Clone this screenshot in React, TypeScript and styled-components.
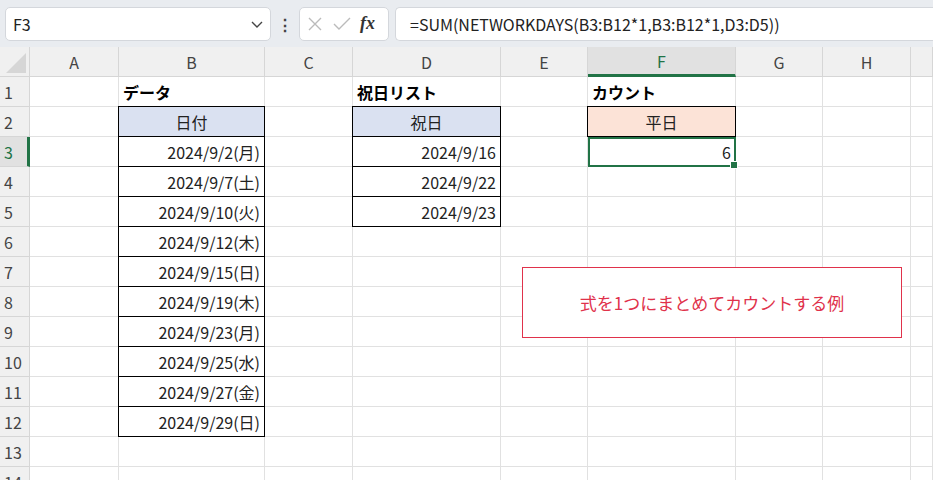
import React from "react";
import styled, { createGlobalStyle } from "styled-components";

const Global = createGlobalStyle`
  body { margin: 0; background: #fff; font-family: "Noto Sans CJK JP", "Noto Sans", sans-serif; }
`;

const Page = styled.div`
  width: 933px;
  height: 480px;
  overflow: hidden;
  position: relative;
  background: #fff;
`;

const Toolbar = styled.div`
  height: 47px;
  background: #e9ecf0;
  display: flex;
  align-items: center;
  padding: 0 0 0 5px;
  gap: 6px;
  box-sizing: border-box;
`;

const NameBox = styled.div`
  width: 266px;
  height: 34px;
  background: #fff;
  border: 1px solid #d4d7dc;
  border-radius: 5px;
  box-sizing: border-box;
  display: flex;
  align-items: center;
  justify-content: space-between;
  padding: 0 6px 0 7px;
  font-size: 16px;
  color: #222;
`;

const Dots = styled.div`
  width: 16px;
  text-align: center;
  font-weight: bold;
  color: #444;
  font-size: 16px;
  line-height: 1;
`;

const FxBox = styled.div`
  width: 90px;
  height: 34px;
  background: #fff;
  border: 1px solid #d4d7dc;
  border-radius: 5px;
  box-sizing: border-box;
  display: flex;
  align-items: center;
  gap: 8px;
  padding: 0 6px;
`;

const Fx = styled.span`
  font-family: "Liberation Serif", serif;
  font-style: italic;
  font-weight: bold;
  font-size: 18px;
  color: #333;
`;

const FormulaBox = styled.div`
  flex: 1;
  height: 34px;
  background: #fff;
  border: 1px solid #d4d7dc;
  border-right: none;
  border-radius: 5px 0 0 5px;
  box-sizing: border-box;
  display: flex;
  align-items: center;
  padding-left: 14px;
  font-size: 16px;
  color: #222;
`;

const Grid = styled.div`
  display: grid;
  grid-template-columns: 30px 89px 146px 88px 148px 87px 148px 87px 88px 22px;
  grid-auto-rows: 30px;
  grid-template-rows: 30px;
  position: relative;
`;

const ColHead = styled.div<{ $active?: boolean }>`
  background: ${(p) => (p.$active ? "#e1e1e1" : "#f0f0f0")};
  border-right: 1px solid #d6d6d6;
  border-bottom: ${(p) => (p.$active ? "3px solid #217346" : "1px solid #d6d6d6")};
  color: ${(p) => (p.$active ? "#217346" : "#444")};
  display: flex;
  align-items: center;
  justify-content: center;
  font-size: 16px;
  box-sizing: border-box;
`;

const Corner = styled(ColHead)`
  position: relative;
  &::after {
    content: "";
    position: absolute;
    right: 3px;
    bottom: 3px;
    border-left: 20px solid transparent;
    border-bottom: 20px solid #d6d6d6;
  }
`;

const RowHead = styled.div<{ $active?: boolean }>`
  background: ${(p) => (p.$active ? "#e1e1e1" : "#f0f0f0")};
  border-right: ${(p) => (p.$active ? "3px solid #217346" : "1px solid #d6d6d6")};
  border-bottom: 1px solid #d6d6d6;
  color: ${(p) => (p.$active ? "#217346" : "#444")};
  display: flex;
  align-items: center;
  padding-left: 4px;
  font-size: 16px;
  box-sizing: border-box;
`;

const Cell = styled.div<{ $boxed?: boolean; $align?: string; $bold?: boolean; $bg?: string }>`
  border-right: 1px solid ${(p) => (p.$boxed ? "#000" : "#e1e1e1")};
  border-bottom: 1px solid ${(p) => (p.$boxed ? "#000" : "#e1e1e1")};
  box-shadow: ${(p) => (p.$boxed ? "-1px 0 0 #000, 0 -1px 0 #000, -1px -1px 0 #000" : "none")};
  position: relative;
  z-index: ${(p) => (p.$boxed ? 1 : 0)};
  background: ${(p) => p.$bg || "#fff"};
  display: flex;
  align-items: center;
  justify-content: ${(p) => p.$align || "flex-start"};
  padding: 0 4px;
  font-size: 16px;
  font-weight: ${(p) => (p.$bold ? 700 : 400)};
  color: ${(p) => (p.$bold ? "#000" : "#222")};
  box-sizing: border-box;
  white-space: nowrap;
`;

const Selected = styled(Cell)`
  outline: 2px solid #217346;
  outline-offset: -2px;
  z-index: 2;
  &::after {
    content: "";
    position: absolute;
    right: -3px;
    bottom: -3px;
    width: 6px;
    height: 6px;
    background: #217346;
    border: 1px solid #fff;
  }
`;

const Note = styled.div`
  position: absolute;
  left: 522px;
  top: 267px;
  width: 380px;
  height: 71px;
  border: 1px solid #e0324b;
  background: #fff;
  box-sizing: border-box;
  display: flex;
  align-items: center;
  justify-content: center;
  color: #e0324b;
  font-size: 17px;
  z-index: 5;
`;

const cols = ["A", "B", "C", "D", "E", "F", "G", "H", ""];
const dates = [
  "2024/9/2(月)", "2024/9/7(土)", "2024/9/10(火)", "2024/9/12(木)", "2024/9/15(日)",
  "2024/9/19(木)", "2024/9/23(月)", "2024/9/25(水)", "2024/9/27(金)", "2024/9/29(日)",
];
const holidays = ["2024/9/16", "2024/9/22", "2024/9/23"];

const Chevron = () => (
  <svg width="14" height="14" viewBox="0 0 14 14">
    <path d="M2 5l5 5 5-5" fill="none" stroke="#444" strokeWidth="1.4" />
  </svg>
);

const renderRow = (r: number) => {
  const cells: React.ReactNode[] = [];
  for (let c = 0; c < 9; c++) {
    const key = `${r}-${c}`;
    let cell = <Cell key={key} />;
    if (r === 1 && c === 1) cell = <Cell key={key} $bold>データ</Cell>;
    if (r === 1 && c === 3) cell = <Cell key={key} $bold>祝日リスト</Cell>;
    if (r === 1 && c === 5) cell = <Cell key={key} $bold>カウント</Cell>;
    if (r === 2 && c === 1) cell = <Cell key={key} $boxed $align="center" $bg="#dae1f1">日付</Cell>;
    if (r === 2 && c === 3) cell = <Cell key={key} $boxed $align="center" $bg="#dae1f1">祝日</Cell>;
    if (r === 2 && c === 5) cell = <Cell key={key} $boxed $align="center" $bg="#fce3d7">平日</Cell>;
    if (r >= 3 && r <= 12 && c === 1) cell = <Cell key={key} $boxed $align="flex-end">{dates[r - 3]}</Cell>;
    if (r >= 3 && r <= 5 && c === 3) cell = <Cell key={key} $boxed $align="flex-end">{holidays[r - 3]}</Cell>;
    if (r === 3 && c === 5) cell = <Selected key={key} $align="flex-end">6</Selected>;
    cells.push(cell);
  }
  return cells;
};

export default function App() {
  return (
    <Page>
      <Global />
      <Toolbar>
        <NameBox>
          <span>F3</span>
          <Chevron />
        </NameBox>
        <Dots>⋮</Dots>
        <FxBox>
          <svg width="18" height="18" viewBox="0 0 18 18">
            <path d="M3 3l12 12M15 3L3 15" stroke="#bbb" strokeWidth="1.4" />
          </svg>
          <svg width="20" height="18" viewBox="0 0 20 18">
            <path d="M2 9l5 5L18 3" fill="none" stroke="#bbb" strokeWidth="1.4" />
          </svg>
          <Fx>fx</Fx>
        </FxBox>
        <FormulaBox>=SUM(NETWORKDAYS(B3:B12*1,B3:B12*1,D3:D5))</FormulaBox>
      </Toolbar>
      <Grid>
        <Corner />
        {cols.map((c, i) => (
          <ColHead key={i} $active={c === "F"}>{c}</ColHead>
        ))}
        {Array.from({ length: 14 }, (_, i) => i + 1).map((r) => (
          <React.Fragment key={r}>
            <RowHead $active={r === 3}>{r}</RowHead>
            {renderRow(r)}
          </React.Fragment>
        ))}
      </Grid>
      <Note>式を1つにまとめてカウントする例</Note>
    </Page>
  );
}
